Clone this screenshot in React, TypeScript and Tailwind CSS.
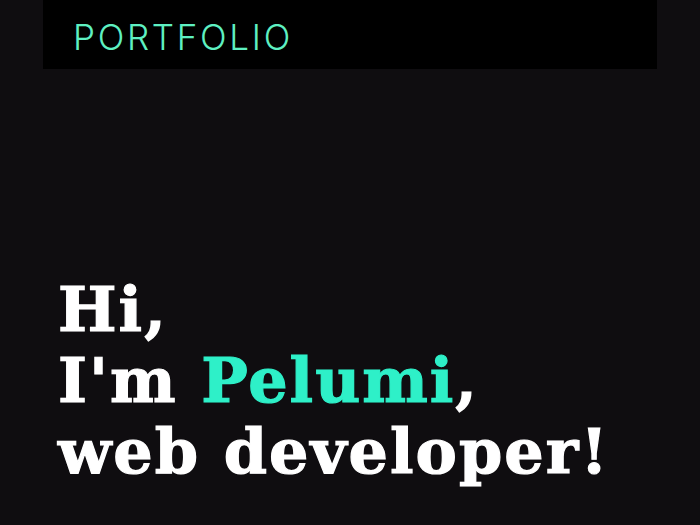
import React from "react";

export default function App() {
  return (
    <div className="min-h-[525px] w-full bg-[#0f0d10]">
      <header className="mx-[43px] flex h-[69px] items-center bg-black px-[30px] pt-[6px]">
        <span className="font-['Inter',sans-serif] text-[35px] font-light leading-none tracking-[2.7px] text-[#5ef0c2]">
          PORTFOLIO
        </span>
      </header>
      <main className="px-[58px] pt-[205px]">
        <h1 className="font-['DejaVu_Serif',serif] text-[62px] font-bold leading-[71px] tracking-[2px] text-white [-webkit-text-stroke:1.2px_currentColor]">
          Hi,
          <br />
          I'm <span className="text-[#2ef0c8]">Pelumi</span>,
          <br />
          web developer!
        </h1>
      </main>
    </div>
  );
}
